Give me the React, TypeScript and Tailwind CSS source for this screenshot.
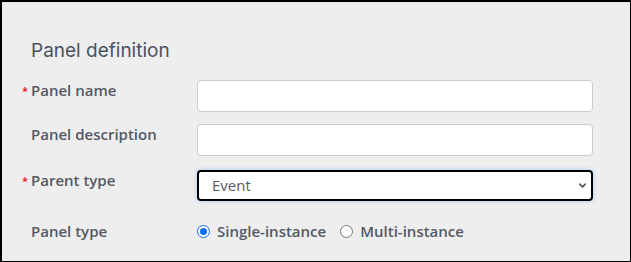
import { ChevronDown } from "lucide-react";

const Label = ({ text, required }: { text: string; required?: boolean }) => (
  <div className="relative w-[166px] shrink-0 text-[15px] leading-[20px] font-semibold text-[#535965]">
    {required && <span className="absolute -left-[9px] top-[1px] text-[11px] text-[#e0101a]">*</span>}
    {text}
  </div>
);

const Radio = ({ label, checked }: { label: string; checked?: boolean }) => (
  <label className="flex items-center gap-[7px]">
    {checked ? (
      <span className="flex h-[13px] w-[13px] items-center justify-center rounded-full border-[1.5px] border-[#0b6cf0] bg-white">
        <span className="h-[7px] w-[7px] rounded-full bg-[#0b6cf0]" />
      </span>
    ) : (
      <span className="h-[13px] w-[13px] rounded-full border border-[#767676] bg-white" />
    )}
    <span className="text-[15px] font-semibold text-[#535965]">{label}</span>
  </label>
);

export default function App() {
  return (
    <div
      className="h-[262px] w-[631px] border-t-2 border-l-2 border-r border-b border-black bg-[#eeeeee] pl-[29px] pt-[36px]"
      style={{ fontFamily: '"Open Sans", sans-serif' }}
    >
      <h2 className="text-[19px] leading-[26px] text-[#4b5260]" style={{ fontFamily: "Inter, sans-serif" }}>
        Panel definition
      </h2>
      <div className="mt-[16px] flex flex-col">
        <div className="flex items-start">
          <Label text="Panel name" required />
          <input className="h-[32px] w-[396px] rounded-[4px] border border-[#cccccc] bg-white" />
        </div>
        <div className="mt-[12px] flex items-start">
          <Label text="Panel description" />
          <input className="h-[32px] w-[396px] rounded-[4px] border border-[#cccccc] bg-white" />
        </div>
        <div className="mt-[14px] flex items-start">
          <Label text="Parent type" required />
          <div className="relative">
            <select className="h-[31px] w-[396px] appearance-none rounded-[4px] border-2 border-black bg-white pl-[13px] text-[15px] text-[#555b66] shadow-[0_0_4px_1px_#bcd8f5] outline-none">
              <option>Event</option>
            </select>
            <ChevronDown className="pointer-events-none absolute right-[5px] top-[10px] h-[11px] w-[11px] text-[#555]" strokeWidth={3.5} />
          </div>
        </div>
        <div className="mt-[19px] flex items-center">
          <Label text="Panel type" />
          <div className="flex items-center gap-[14px]">
            <Radio label="Single-instance" checked />
            <Radio label="Multi-instance" />
          </div>
        </div>
      </div>
    </div>
  );
}
